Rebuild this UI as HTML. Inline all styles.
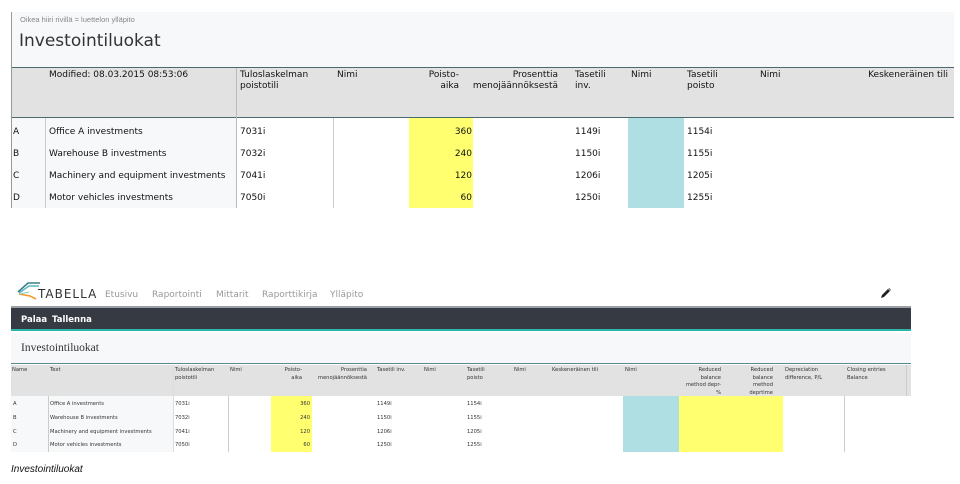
<!DOCTYPE html>
<html><head><meta charset="utf-8"><style>
*{margin:0;padding:0;box-sizing:border-box}
body{width:960px;height:484px;background:#fff;position:relative;overflow:hidden;font-family:"DejaVu Sans","Liberation Sans",sans-serif;color:#111}
.a{position:absolute;white-space:nowrap}
.t{font-size:9px;line-height:11px}
.s{font-size:5.2px;line-height:7.5px;color:#333}
.r{text-align:right}
</style></head><body>
<!-- TOP -->
<div class="a" style="left:11px;top:12px;width:943px;height:196px;background:#f7f8fa;border-left:1px solid #999"></div>
<div class="a" style="left:20px;top:15px;font-size:7.5px;color:#888;font-family:'Liberation Sans',sans-serif">Oikea hiiri rivillä = luettelon ylläpito</div>
<div class="a" style="left:19px;top:31px;font-size:17px;color:#333;font-family:'DejaVu Sans',sans-serif">Investointiluokat</div>
<div class="a" style="left:12px;top:67px;width:942px;height:51px;background:#e2e2e2;border-top:1px solid #4a6a70;border-bottom:1px solid #4a6a70"></div>
<div class="a" style="left:236px;top:68px;width:1px;height:140px;background:#bbb"></div>
<div class="a" style="left:237px;top:118px;width:717px;height:90px;background:#fff"></div>
<div class="a" style="left:45px;top:118px;width:1px;height:90px;background:#ccc"></div>
<div class="a" style="left:333px;top:118px;width:1px;height:90px;background:#ccc"></div>
<div class="a" style="left:409px;top:118px;width:64px;height:90px;background:#ffff70"></div>
<div class="a" style="left:628px;top:118px;width:56px;height:90px;background:#b0dfe3"></div>
<div class="a t" style="left:49px;top:70px">Modified: 08.03.2015 08:53:06</div>
<div class="a t" style="left:240px;top:70px">Tuloslaskelman<br>poistotili</div>
<div class="a t" style="left:337px;top:70px">Nimi</div>
<div class="a t r" style="left:400px;width:59px;top:70px">Poisto-<br>aika</div>
<div class="a t r" style="left:470px;width:88px;top:70px">Prosenttia<br>menojäännöksestä</div>
<div class="a t" style="left:575px;top:70px">Tasetili<br>inv.</div>
<div class="a t" style="left:631px;top:70px">Nimi</div>
<div class="a t" style="left:687px;top:70px">Tasetili<br>poisto</div>
<div class="a t" style="left:760px;top:70px">Nimi</div>
<div class="a t r" style="left:840px;width:108px;top:70px">Keskeneräinen tili</div>
<div class="a t" style="left:13px;top:121px;line-height:22px">A<br>B<br>C<br>D</div>
<div class="a t" style="left:49px;top:121px;line-height:22px">Office A investments<br>Warehouse B investments<br>Machinery and equipment investments<br>Motor vehicles investments</div>
<div class="a t" style="left:240px;top:121px;line-height:22px">7031i<br>7032i<br>7041i<br>7050i</div>
<div class="a t r" style="left:420px;width:52px;top:121px;line-height:22px">360<br>240<br>120<br>60</div>
<div class="a t" style="left:575px;top:121px;line-height:22px">1149i<br>1150i<br>1206i<br>1250i</div>
<div class="a t" style="left:687px;top:121px;line-height:22px">1154i<br>1155i<br>1205i<br>1255i</div>

<!-- BOTTOM -->
<svg class="a" style="left:16px;top:280px" width="26" height="20" viewBox="0 0 26 20">
<path d="M2 12 L12 3 L24 3" stroke="#3a7f8c" stroke-width="1.6" fill="none"/>
<path d="M3 13 L13 6 L23 6" stroke="#5ab7c0" stroke-width="1.4" fill="none"/>
<path d="M3 14 L14 16 L20 19" stroke="#f39a2b" stroke-width="1.6" fill="none"/>
<path d="M4 14 L13 12" stroke="#8cc" stroke-width="1" fill="none"/>
</svg>
<div class="a" style="left:38px;top:287px;font-size:12px;letter-spacing:1px;color:#333;font-family:'DejaVu Sans',sans-serif">TABELLA</div>
<div class="a" style="left:105px;top:290px;font-size:9px;color:#999;word-spacing:0">Etusivu</div>
<div class="a" style="left:152px;top:290px;font-size:9px;color:#999">Raportointi</div>
<div class="a" style="left:216px;top:290px;font-size:9px;color:#999">Mittarit</div>
<div class="a" style="left:262px;top:290px;font-size:9px;color:#999">Raporttikirja</div>
<div class="a" style="left:330px;top:290px;font-size:9px;color:#999">Ylläpito</div>
<svg class="a" style="left:880px;top:287px" width="12" height="12" viewBox="0 0 12 12"><path d="M1 11 L2 8 L8 2 L10 4 L4 10 Z" fill="#222"/><path d="M8.5 1.5 L10.5 3.5 L11 3 L9 1Z" fill="#222"/></svg>
<div class="a" style="left:11px;top:306px;width:900px;height:2px;background:#9aa0a6"></div>
<div class="a" style="left:11px;top:308px;width:900px;height:23px;background:#363a42;border-bottom:2px solid #2cb5a8"></div>
<div class="a" style="left:21px;top:315px;font-size:8.5px;font-weight:bold;color:#fff">Palaa</div>
<div class="a" style="left:52px;top:315px;font-size:8.5px;font-weight:bold;color:#fff">Tallenna</div>
<div class="a" style="left:11px;top:333px;width:900px;height:31px;background:#f7f8fa;border-bottom:1px solid #5a8a90"></div>
<div class="a" style="left:21px;top:342px;font-size:11.5px;color:#333;font-family:'Liberation Serif','DejaVu Serif',serif">Investointiluokat</div>
<div class="a" style="left:11px;top:365px;width:900px;height:31px;background:#e2e2e2"></div>
<div class="a" style="left:906px;top:365px;width:1px;height:31px;background:#ccc"></div>
<div class="a" style="left:11px;top:396px;width:162px;height:56px;background:#f7f8fa"></div>
<div class="a" style="left:48px;top:396px;width:1px;height:56px;background:#ccc"></div>
<div class="a" style="left:173px;top:365px;width:1px;height:87px;background:#ddd"></div>
<div class="a" style="left:228px;top:396px;width:1px;height:56px;background:#ccc"></div>
<div class="a" style="left:271px;top:396px;width:41px;height:56px;background:#ffff70"></div>
<div class="a" style="left:623px;top:396px;width:56px;height:56px;background:#b0dfe3"></div>
<div class="a" style="left:679px;top:396px;width:104px;height:56px;background:#ffff70"></div>
<div class="a" style="left:844px;top:396px;width:1px;height:56px;background:#ccc"></div>
<div class="a s" style="left:12px;top:367px">Name</div>
<div class="a s" style="left:50px;top:367px">Text</div>
<div class="a s" style="left:175px;top:367px">Tuloslaskelman<br>poistotili</div>
<div class="a s" style="left:230px;top:367px">Nimi</div>
<div class="a s r" style="left:270px;width:32px;top:367px">Poisto-<br>aika</div>
<div class="a s r" style="left:310px;width:57px;top:367px">Prosenttia<br>menojäännöksestä</div>
<div class="a s" style="left:377px;top:367px">Tasetili inv.</div>
<div class="a s" style="left:424px;top:367px">Nimi</div>
<div class="a s" style="left:467px;top:367px">Tasetili<br>poisto</div>
<div class="a s" style="left:514px;top:367px">Nimi</div>
<div class="a s" style="left:552px;top:367px">Keskeneräinen tili</div>
<div class="a s" style="left:625px;top:367px">Nimi</div>
<div class="a s r" style="left:680px;width:41px;top:367px">Reduced<br>balance<br>method depr-<br>%</div>
<div class="a s r" style="left:735px;width:38px;top:367px">Reduced<br>balance<br>method<br>deprtime</div>
<div class="a s" style="left:785px;top:367px">Depreciation<br>difference, P/L</div>
<div class="a s" style="left:847px;top:367px">Closing entries<br>Balance</div>
<div class="a s" style="left:13px;top:398px;line-height:13.8px">A<br>B<br>C<br>D</div>
<div class="a s" style="left:50px;top:398px;line-height:13.8px">Office A investments<br>Warehouse B investments<br>Machinery and equipment investments<br>Motor vehicles investments</div>
<div class="a s" style="left:175px;top:398px;line-height:13.8px">7031i<br>7032i<br>7041i<br>7050i</div>
<div class="a s r" style="left:280px;width:30px;top:398px;line-height:13.8px">360<br>240<br>120<br>60</div>
<div class="a s" style="left:377px;top:398px;line-height:13.8px">1149i<br>1150i<br>1206i<br>1250i</div>
<div class="a s" style="left:467px;top:398px;line-height:13.8px">1154i<br>1155i<br>1205i<br>1255i</div>
<div class="a" style="left:11px;top:464px;font-size:10px;font-style:italic;color:#111;font-family:'Liberation Sans',sans-serif">Investointiluokat</div>
</body></html>
